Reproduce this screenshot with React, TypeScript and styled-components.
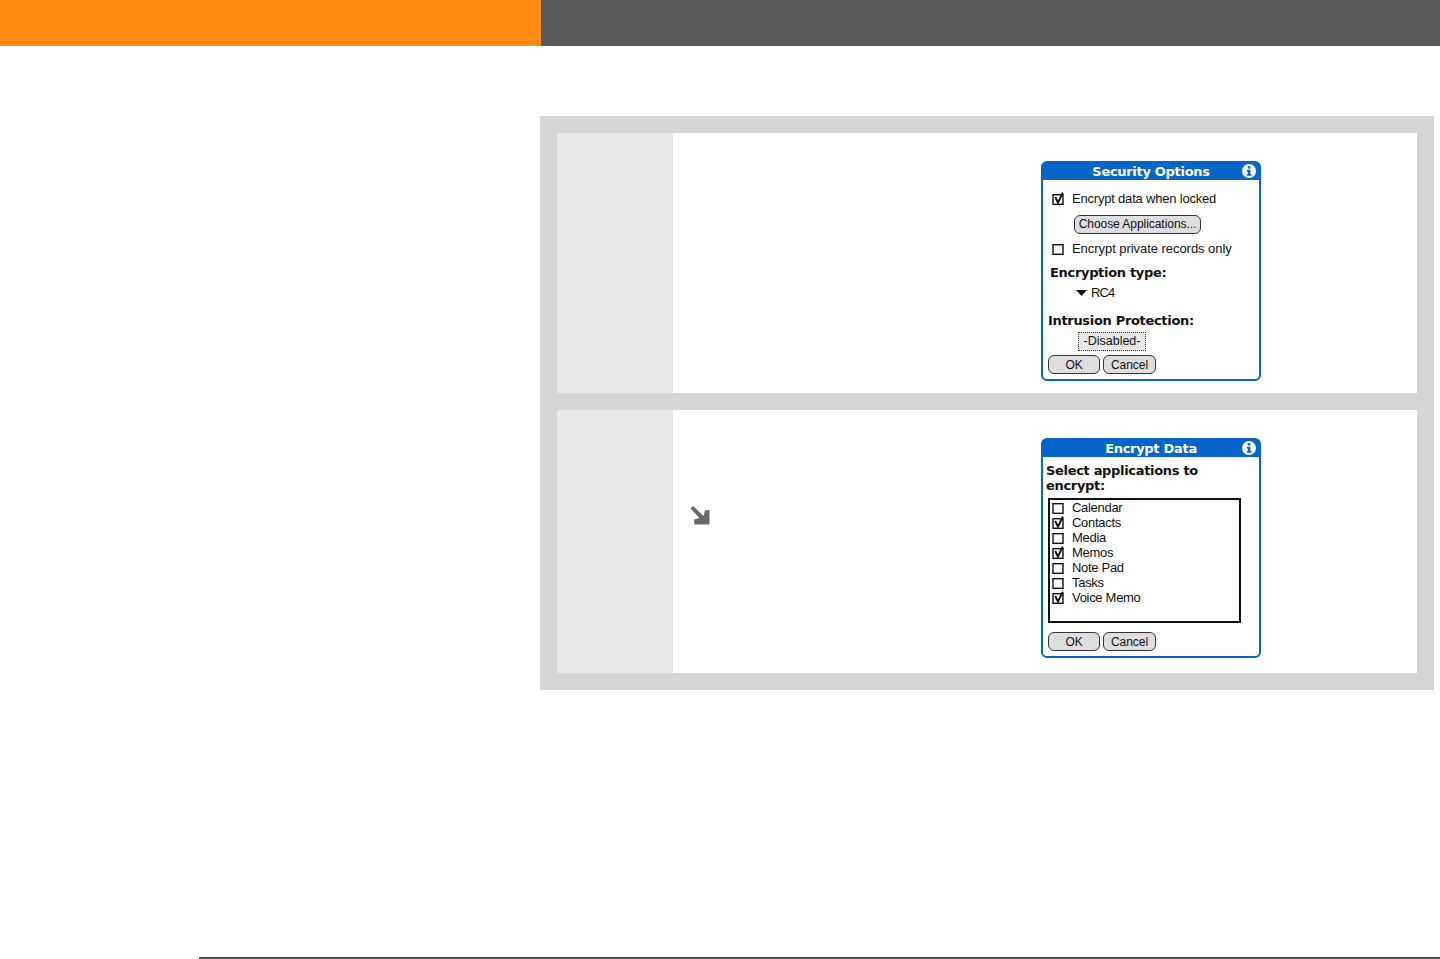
import React from "react";
import styled, { createGlobalStyle } from "styled-components";

const Global = createGlobalStyle`
  html, body { margin: 0; padding: 0; background: #fff; }
  body { font-family: "Liberation Sans", Arial, sans-serif; }
`;
const Page = styled.div`
  height: 959px; display: flex; flex-direction: column; overflow: hidden;
`;
const Header = styled.header`
  height: 46px; flex: none; display: flex;
`;
const HeaderOrange = styled.div`
  width: 541px; background: #ff8a14;
`;
const HeaderGray = styled.div`
  flex: 1; background: #5a5a5a;
`;
const Main = styled.main`
  flex: 1; padding: 70px 6px 0 540px;
`;
const Panel = styled.section`
  background: #d5d5d5; padding: 17px; display: flex; flex-direction: column; gap: 17px;
`;
const Step = styled.div<{ $h: number }>`
  height: ${p => p.$h}px; display: flex; background: #fff;
`;
const StepNumber = styled.div`
  width: 116px; flex: none; background: #e8e8e8;
`;
const StepBody = styled.div`
  flex: 1; display: flex; padding: 28px 156px 0 17px;
`;
const StepText = styled.div`
  flex: 1; padding-top: 67px;
`;
const Footer = styled.footer`
  height: 2px; margin-left: 199px; background: #555; flex: none;
`;
const Dialog = styled.div`
  width: 220px; height: 220px; box-sizing: border-box; flex: none;
  border: 2px solid #0565c8; border-radius: 6px; background: #fff;
  display: flex; flex-direction: column; color: #111;
  font-size: 13px; line-height: 18px; padding-bottom: 5px;
`;
const TitleBar = styled.div`
  height: 17px; flex: none; background: #0565c8; color: #fff; position: relative;
  font: bold 13px/17px "DejaVu Sans", sans-serif; text-align: center;
  letter-spacing: -0.3px;
`;
const InfoIcon = styled.svg`
  position: absolute; right: 3px; top: 1px;
`;
const Row = styled.div<{ $mt: number; $pl: number }>`
  display: flex; align-items: center; height: 18px; margin-top: ${p => p.$mt}px; padding-left: ${p => p.$pl}px;
`;
const Box = styled.svg`
  width: 14px; height: 14px; flex: none; margin-right: 7px;
`;
const Label = styled.span<{ $sp: number }>`
  white-space: nowrap; letter-spacing: ${p => p.$sp}px;
`;
const Heading = styled.div<{ $mt: number; $pl: number }>`
  margin-top: ${p => p.$mt}px; padding-left: ${p => p.$pl}px; height: 18px;
  font: bold 13px/20px "DejaVu Sans", sans-serif; white-space: nowrap; letter-spacing: -0.32px;
`;
const Pill = styled.div<{ $w: number }>`
  width: ${p => p.$w}px; height: 19px; box-sizing: border-box; flex: none;
  border: 1.5px solid #333; border-radius: 6px; background: #dedede; white-space: nowrap;
  display: flex; align-items: center; justify-content: center; font-size: 12px; letter-spacing: -0.05px;
`;
const DottedPill = styled.div`
  width: 68px; height: 19px; box-sizing: border-box; border: 1px dotted #333; background: #e6e6e6;
  display: flex; align-items: center; justify-content: center; font-size: 12.5px; white-space: nowrap;
`;
const Buttons = styled.div<{ $mt: number }>`
  display: flex; gap: 3px; padding-left: 5px; margin-top: ${p => p.$mt}px;
`;
const ArrowRow = styled.svg`
  display: block;
`;
const TriangleIcon = styled.svg`
  flex: none; margin-right: 4px;
`;
const ListBox = styled.div`
  width: 193px; height: 125px; box-sizing: border-box; margin: 4px 0 0 5px; border: 2px solid #111;
  padding: 0 0 0 1px; display: flex; flex-direction: column;
`;
const ListRow = styled.div`
  height: 15.15px; display: flex; align-items: center; 
`;

const Info = () => (
  <InfoIcon width="14" height="14" viewBox="0 0 14 14">
    <circle cx="7" cy="7" r="7" fill="#fff" />
    <rect x="5.8" y="2.2" width="2.6" height="2.4" fill="#0565c8" />
    <path d="M4.8 5.8h3.6v4.4h1.2v1.6H4.8v-1.6h1v-2.8h-1z" fill="#0565c8" />
  </InfoIcon>
);
const Check = ({ on }: { on?: boolean }) => (
  <Box viewBox="0 0 14 14">
    <rect x="2" y="2.7" width="10" height="9.6" fill="none" stroke="#111" strokeWidth="1.4" />
    {on && <path d="M4.2 5 L7 10.6 L11.8 0.6" fill="none" stroke="#111" strokeWidth="2" />}
  </Box>
);

const apps: [string, boolean][] = [
  ["Calendar", false], ["Contacts", true], ["Media", false], ["Memos", true],
  ["Note Pad", false], ["Tasks", false], ["Voice Memo", true],
];

export default function App() {
  return (
    <Page>
      <Global />
      <Header><HeaderOrange /><HeaderGray /></Header>
      <Main>
        <Panel>
          <Step $h={260}>
            <StepNumber />
            <StepBody>
              <StepText />
              <Dialog>
                <TitleBar>Security Options<Info /></TitleBar>
                <Row $mt={10} $pl={8}><Check on /><Label $sp={-0.2}>Encrypt data when locked</Label></Row>
                <Row $mt={7} $pl={31}><Pill $w={127}>Choose Applications...</Pill></Row>
                <Row $mt={7} $pl={8}><Check /><Label $sp={-0.05}>Encrypt private records only</Label></Row>
                <Heading $mt={5} $pl={7}>Encryption type:</Heading>
                <Row $mt={3} $pl={33}>
                  <TriangleIcon width="11" height="6" viewBox="0 0 11 6"><path d="M0 0h11L5.5 6z" fill="#111" /></TriangleIcon>
                  <Label $sp={-0.9}>RC4</Label>
                </Row>
                <Heading $mt={9} $pl={5}>Intrusion Protection:</Heading>
                <Row $mt={3} $pl={35}><DottedPill>-Disabled-</DottedPill></Row>
                <Buttons $mt={5}><Pill $w={52}>OK</Pill><Pill $w={53}>Cancel</Pill></Buttons>
              </Dialog>
            </StepBody>
          </Step>
          <Step $h={263}>
            <StepNumber />
            <StepBody>
              <StepText>
                <ArrowRow width="22" height="22" viewBox="0 0 22 22">
                  <path d="M3 1 L0.5 3.5 L9.5 13 L4 14.5 L4.5 19.5 L19.5 19.5 L19.5 5 L15 5.5 L13.5 11 Z" fill="#6a6a6a" />
                </ArrowRow>
              </StepText>
              <Dialog>
                <TitleBar>Encrypt Data<Info /></TitleBar>
                <Heading $mt={4} $pl={3}>Select applications to</Heading>
                <Heading $mt={-3} $pl={3}>encrypt:</Heading>
                <ListBox>
                  {apps.map(([name, on]) => (
                    <ListRow key={name}><Check on={on} /><Label $sp={-0.3}>{name}</Label></ListRow>
                  ))}
                </ListBox>
                <Buttons $mt={9}><Pill $w={52}>OK</Pill><Pill $w={53}>Cancel</Pill></Buttons>
              </Dialog>
            </StepBody>
          </Step>
        </Panel>
      </Main>
      <Footer />
    </Page>
  );
}
